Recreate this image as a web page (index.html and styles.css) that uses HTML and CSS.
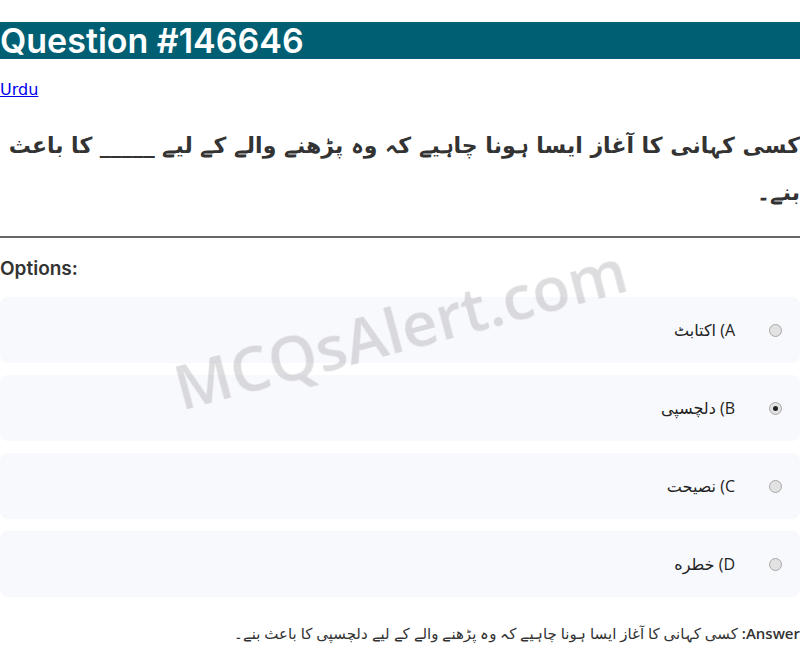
FILE: index.html
```html
<!DOCTYPE html>
<html lang="ur">
<head>
<meta charset="utf-8">
<title>Question #146646</title>
<link rel="stylesheet" href="styles.css">
</head>
<body>
<h1 class="title">Question #146646</h1>
<p class="lang"><a href="#">Urdu</a></p>
<p class="question">کسی کہانی کا آغاز ایسا ہونا چاہیے کہ وہ پڑھنے والے کے لیے _____ کا باعث بنے۔</p>
<hr class="rule">
<h3 class="opt-head">Options:</h3>
<div class="options">
  <label class="option"><input type="radio" name="o" disabled><span class="opt-text">A) اکتابٹ</span></label>
  <label class="option"><input type="radio" name="o" disabled checked><span class="opt-text">B) دلچسپی</span></label>
  <label class="option"><input type="radio" name="o" disabled><span class="opt-text">C) نصیحت</span></label>
  <label class="option"><input type="radio" name="o" disabled><span class="opt-text">D) خطره</span></label>
</div>
<p class="answer"><strong>Answer:</strong> کسی کہانی کا آغاز ایسا ہونا چاہیے کہ وہ پڑھنے والے کے لیے دلچسپی کا باعث بنے۔</p>
<div class="watermark">MCQsAlert.com</div>
</body>
</html>
```
FILE: styles.css
```css
html, body {
  margin: 0;
  padding: 0;
  background: #fff;
  font-family: "Open Sans", "DejaVu Sans", sans-serif;
  color: #333;
}
.title {
  margin: 22px 0 21px;
  background: #005f73;
  color: #fff;
  font-family: "Inter", "DejaVu Sans", sans-serif;
  font-size: 34px;
  font-weight: 600;
  line-height: 37px;
}
.lang {
  margin: 0;
  font-family: "DejaVu Sans", sans-serif;
  font-size: 16px;
  line-height: 20px;
}
.lang a {
  color: #00e;
}
.question {
  direction: rtl;
  text-align: right;
  font-family: "DejaVu Sans", sans-serif;
  font-size: 22px;
  font-weight: bold;
  line-height: 47px;
  margin: 22px 0 20px;
  color: #333;
}
.rule {
  margin: 0;
  border: 0;
  border-top: 2px solid #666;
}
.opt-head {
  margin: 20px 0 17px;
  font-family: "Inter", "DejaVu Sans", sans-serif;
  font-size: 19px;
  line-height: 22px;
  font-weight: 600;
}
.options {
  display: flex;
  flex-direction: column;
  gap: 12px;
}
.option {
  direction: rtl;
  display: flex;
  align-items: center;
  height: 66px;
  padding: 0 18px;
  background: #f8f9fc;
  border-radius: 8px;
  font-size: 16px;
  color: #222;
}
.option input {
  appearance: none;
  -webkit-appearance: none;
  box-sizing: border-box;
  margin: 0;
  width: 13px;
  height: 13px;
  border: 1px solid #a8a8a8;
  border-radius: 50%;
  background: #e2e2e2;
  display: flex;
  align-items: center;
  justify-content: center;
}
.option input:checked::before {
  content: "";
  width: 5px;
  height: 5px;
  border-radius: 50%;
  background: #222;
}
.opt-text {
  margin-right: 34px;
}
.answer {
  direction: rtl;
  text-align: right;
  margin: 26px 0 0;
  font-size: 15px;
  line-height: 20px;
}
.answer strong {
  font-weight: 600;
}
.watermark {
  position: fixed;
  left: 50%;
  top: 50%;
  transform: translate(-50%, -52%) rotate(-15deg);
  font-family: "Open Sans", sans-serif;
  font-size: 62px;
  font-weight: 600;
  color: rgba(120, 120, 130, 0.25);
  white-space: nowrap;
  pointer-events: none;
}
```
